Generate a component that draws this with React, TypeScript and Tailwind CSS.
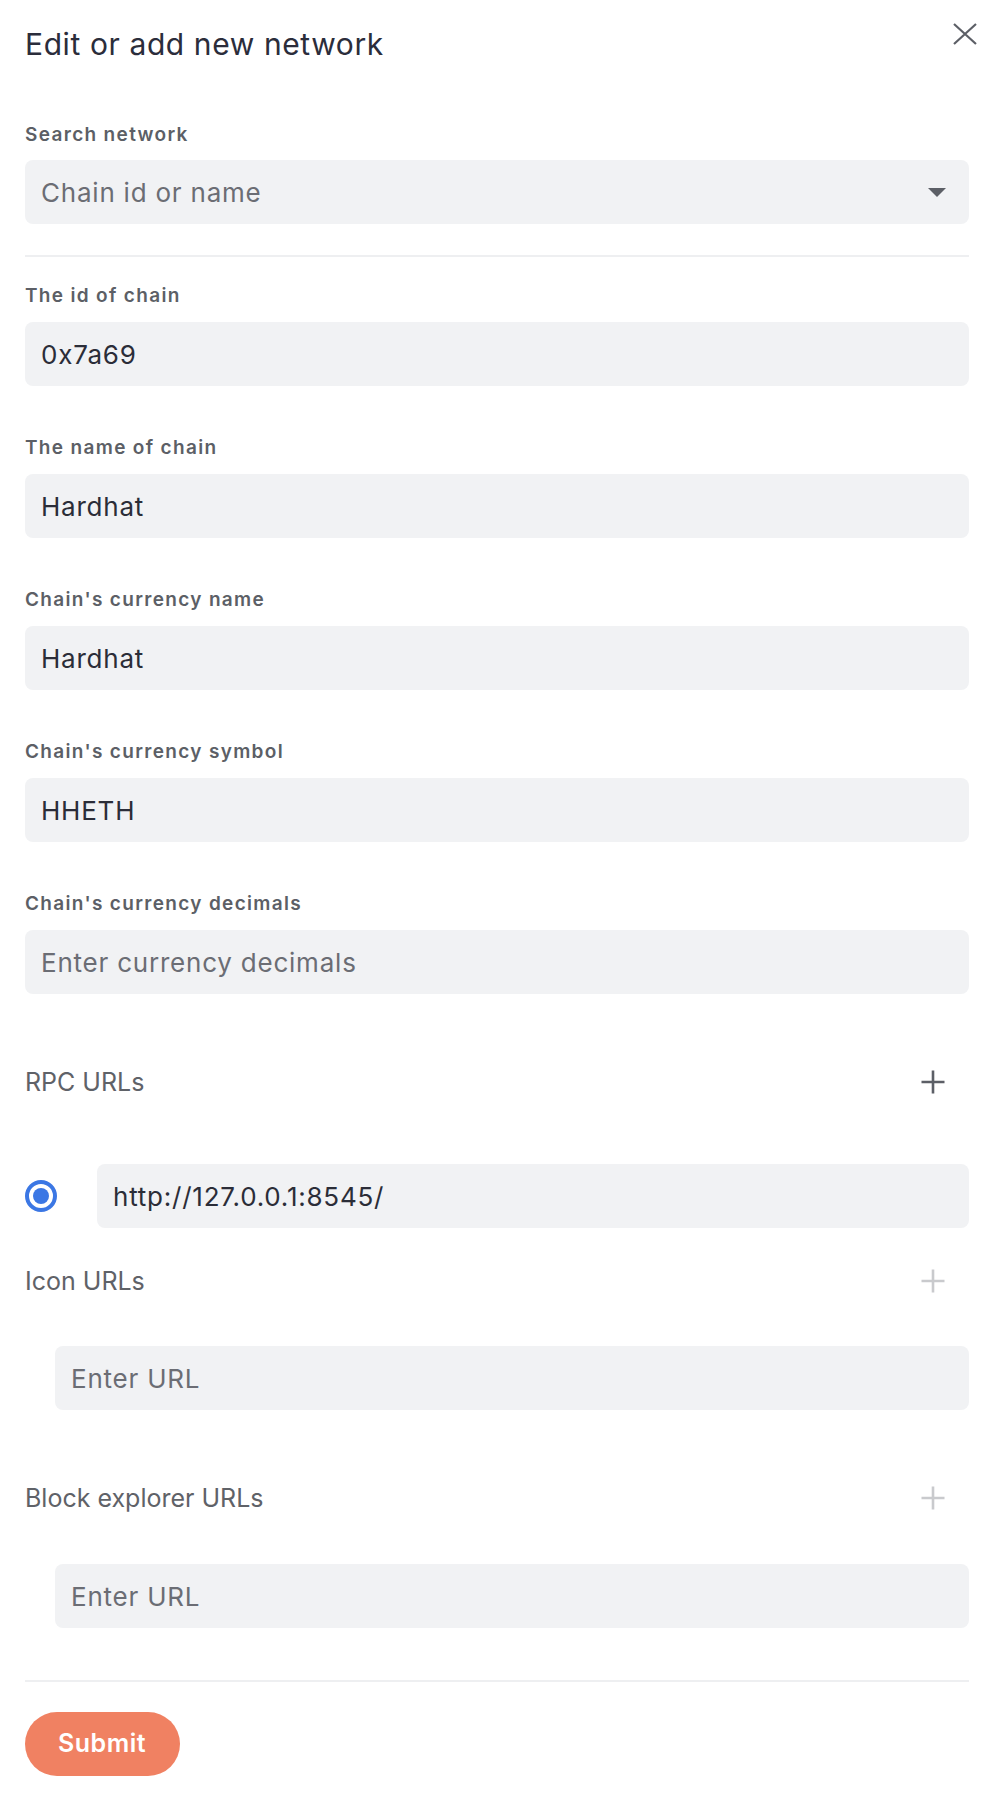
import React from "react";

const font = { fontFamily: "Inter, 'Noto Sans', sans-serif" };

function PlusIcon({ muted }: { muted?: boolean }) {
  return (
    <svg width="24" height="24" viewBox="0 0 24 24" className={muted ? "text-[#c9cacd]" : "text-[#5c5f66]"}>
      <path d="M12 0.5V23.5M0.5 12H23.5" stroke="currentColor" strokeWidth="2.6" fill="none" />
    </svg>
  );
}

function Field({ label, value, placeholder, first }: { label: string; value?: string; placeholder?: string; first?: boolean }) {
  return (
    <div className={first ? "mt-[27px]" : "mt-[50px]"}>
      <div className="text-[19px] leading-[24px] font-semibold tracking-[0.07em] text-[#5c5f66]">{label}</div>
      <input
        readOnly
        value={value ?? ""}
        placeholder={placeholder}
        className="mt-[14px] block h-[64px] w-full rounded-[8px] bg-[#f1f2f4] px-[16px] text-[26px] tracking-[0.03em] text-[#2b2d38] outline-none placeholder:text-[#6b6d74]"
      />
    </div>
  );
}

function SectionHeader({ title, muted }: { title: string; muted?: boolean }) {
  return (
    <div className="flex h-[48px] items-center justify-between">
      <span className="text-[25px] leading-[32px] text-[#5f6268]">{title}</span>
      <span className="mr-[24px] flex">
        <PlusIcon muted={muted} />
      </span>
    </div>
  );
}

export default function App() {
  return (
    <div className="min-h-[1796px] bg-white pl-[25px] pr-[27px] pb-[20px]" style={font}>
      <div className="flex h-[88px] items-start justify-between">
        <h1 className="mt-[26px] text-[30px] leading-[36px] tracking-[0.02em] text-[#2b2d3b]">Edit or add new network</h1>
        <button className="-mr-[8px] mt-[23px] flex text-[#5c5f66]">
          <svg width="24" height="22" viewBox="0 0 24 22">
            <path d="M1 1L23 21M23 1L1 21" stroke="currentColor" strokeWidth="2.2" fill="none" />
          </svg>
        </button>
      </div>

      <div className="mt-[35px] text-[19px] leading-[24px] font-semibold tracking-[0.07em] text-[#5c5f66]">Search network</div>
      <div className="mt-[13px] flex h-[64px] items-center justify-between rounded-[8px] bg-[#f1f2f4] pl-[16px] pr-[23px]">
        <span className="text-[26px] tracking-[0.03em] text-[#6b6d74]">Chain id or name</span>
        <svg width="18" height="9" viewBox="0 0 18 9">
          <path d="M0 0H18L9 9Z" fill="#5c5f66" />
        </svg>
      </div>

      <div className="mt-[31px] h-[2px] bg-[#eeeff1]" />

      <Field first label="The id of chain" value="0x7a69" />
      <Field label="The name of chain" value="Hardhat" />
      <Field label="Chain's currency name" value="Hardhat" />
      <Field label="Chain's currency symbol" value="HHETH" />
      <Field label="Chain's currency decimals" placeholder="Enter currency decimals" />

      <div className="mt-[64px]">
        <SectionHeader title="RPC URLs" />
      </div>
      <div className="mt-[58px] flex h-[64px] items-center gap-[40px]">
        <span className="flex h-[32px] w-[32px] shrink-0 items-center justify-center rounded-full border-[4px] border-[#3b77e4]">
          <span className="h-[16px] w-[16px] rounded-full bg-[#3b77e4]" />
        </span>
        <input
          readOnly
          value="http://127.0.0.1:8545/"
          className="block h-[64px] w-full rounded-[8px] bg-[#f1f2f4] px-[16px] text-[26px] tracking-[0.03em] text-[#2b2d38] outline-none"
        />
      </div>

      <div className="mt-[29px]">
        <SectionHeader title="Icon URLs" muted />
      </div>
      <div className="mt-[41px] pl-[30px]">
        <input
          readOnly
          placeholder="Enter URL"
          className="block h-[64px] w-full rounded-[8px] bg-[#f1f2f4] px-[16px] text-[26px] tracking-[0.03em] outline-none placeholder:text-[#6b6d74]"
        />
      </div>

      <div className="mt-[64px]">
        <SectionHeader title="Block explorer URLs" muted />
      </div>
      <div className="mt-[42px] pl-[30px]">
        <input
          readOnly
          placeholder="Enter URL"
          className="block h-[64px] w-full rounded-[8px] bg-[#f1f2f4] px-[16px] text-[26px] tracking-[0.03em] outline-none placeholder:text-[#6b6d74]"
        />
      </div>

      <div className="mt-[52px] h-[2px] bg-[#eeeff1]" />

      <button className="mt-[30px] flex h-[64px] items-center rounded-full bg-[#f08162] pl-[33px] pr-[34px] text-[25px] font-semibold tracking-[0.02em] text-white">
        Submit
      </button>
    </div>
  );
}
